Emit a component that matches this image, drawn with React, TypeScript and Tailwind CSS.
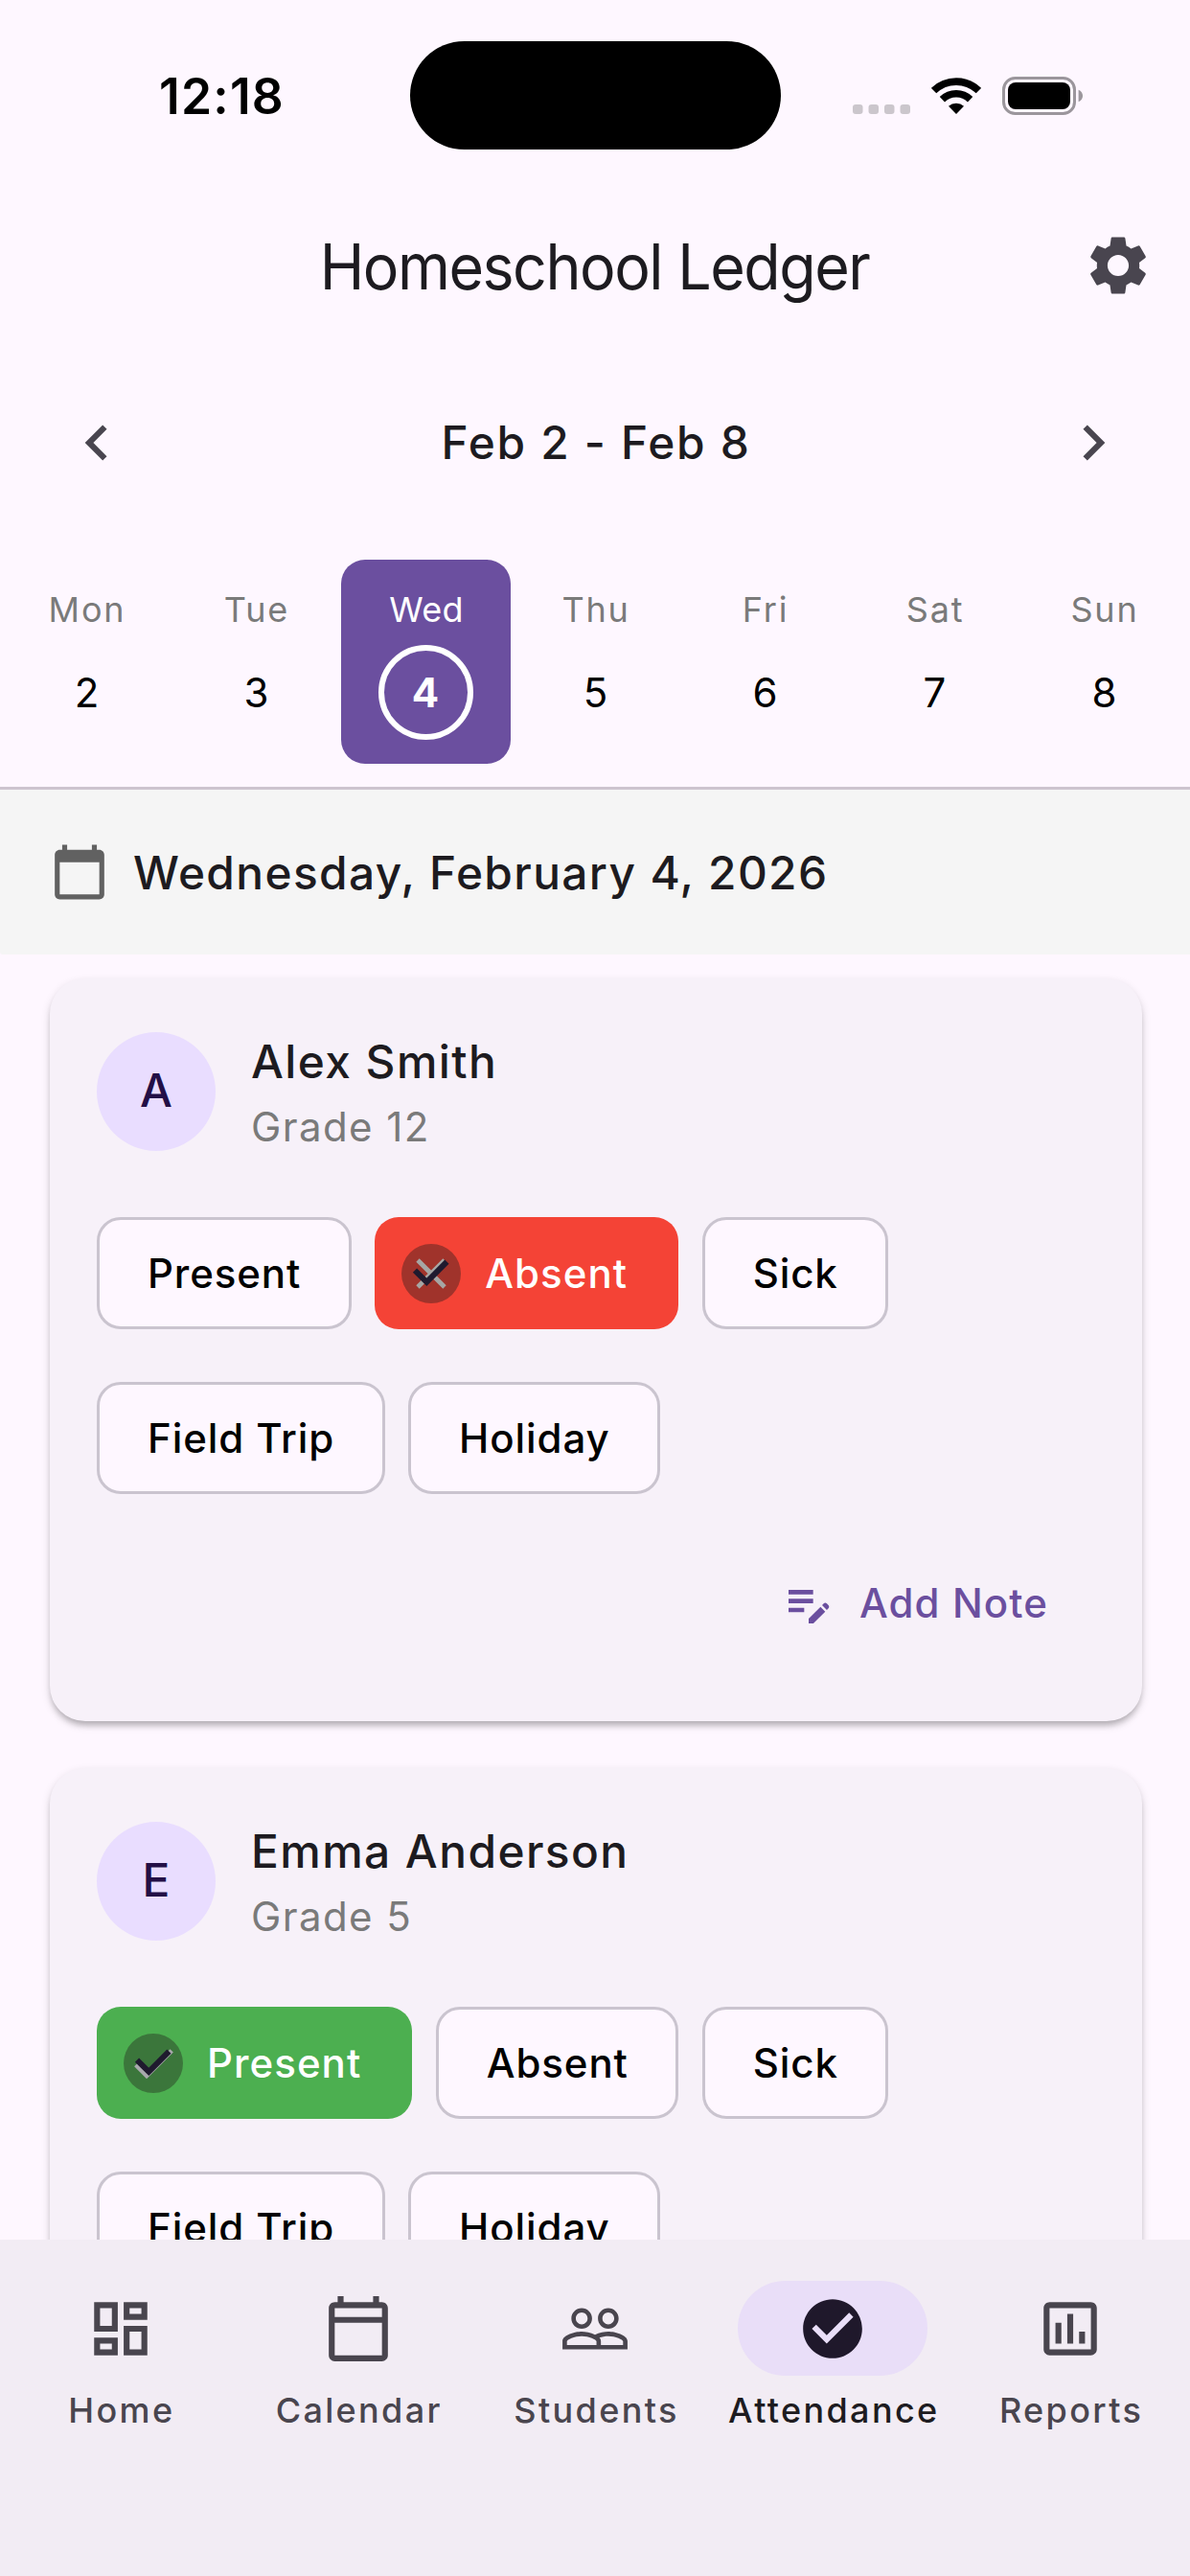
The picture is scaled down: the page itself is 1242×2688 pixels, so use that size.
import React from 'react';
import clsx from 'clsx';
import type { IconType } from 'react-icons';
import {
  MdCalendarToday,
  MdCheckCircle,
  MdChevronLeft,
  MdChevronRight,
  MdEditNote,
  MdOutlineAssessment,
  MdOutlineCalendarToday,
  MdOutlineDashboard,
  MdPeopleOutline,
  MdSettings,
} from 'react-icons/md';

type Status = 'Present' | 'Absent' | 'Sick' | 'Field Trip' | 'Holiday';

interface Student {
  name: string;
  grade: string;
  status: Status;
}

const statuses: Status[] = ['Present', 'Absent', 'Sick', 'Field Trip', 'Holiday'];

const days = [
  { label: 'Mon', date: 2 },
  { label: 'Tue', date: 3 },
  { label: 'Wed', date: 4, selected: true },
  { label: 'Thu', date: 5 },
  { label: 'Fri', date: 6 },
  { label: 'Sat', date: 7 },
  { label: 'Sun', date: 8 },
];

const students: Student[] = [
  { name: 'Alex Smith', grade: 'Grade 12', status: 'Absent' },
  { name: 'Emma Anderson', grade: 'Grade 5', status: 'Present' },
];

const navItems: { label: string; icon: IconType; active?: boolean }[] = [
  { label: 'Home', icon: MdOutlineDashboard },
  { label: 'Calendar', icon: MdOutlineCalendarToday },
  { label: 'Students', icon: MdPeopleOutline },
  { label: 'Attendance', icon: MdCheckCircle, active: true },
  { label: 'Reports', icon: MdOutlineAssessment },
];

function StatusBar() {
  return (
    <div className="flex h-[200px] shrink-0 items-center">
      <div className="w-[428px] pt-px pl-[166px] text-[51.5px] leading-none font-semibold tracking-[1.2px] text-black">
        12:18
      </div>
      <div className="mb-px h-[113px] w-[387px] rounded-full bg-black" />

      {/* Signal, wifi, battery */}
      <svg className="mt-[28px] ml-[75px] h-[10px] w-[60px]" viewBox="0 0 60 10" fill="#cbc6cc">
        <rect x="0" width="10.5" height="10" rx="3" />
        <rect x="16.5" width="10.5" height="10" rx="3" />
        <rect x="33" width="10.5" height="10" rx="3" />
        <rect x="49.5" width="10.5" height="10" rx="3" />
      </svg>
      <svg className="ml-[22px] h-[38px] w-[52px]" viewBox="0 0 52 38" fill="none" stroke="#000" strokeWidth="7.6">
        <path d="M2.6 13.6A33.6 33.6 0 0 1 49.4 13.6" />
        <path d="M11.4 22.7A21 21 0 0 1 40.6 22.7" />
        <path d="M26 38L18 29.8A12 12 0 0 1 34 29.8Z" fill="#000" stroke="none" />
      </svg>
      <svg className="ml-[22px] h-[40px] w-[85px]" viewBox="0 0 85 40">
        <rect x="1.5" y="1.5" width="74" height="37" rx="12" fill="none" stroke="#9b969c" strokeWidth="3" />
        <rect x="6" y="6" width="65" height="28" rx="8" fill="#000" />
        <path d="M79.6 13.8C82.4 14.8 84 17.2 84 20S82.4 25.2 79.6 26.2Z" fill="#9b969c" />
      </svg>
    </div>
  );
}

function WeekStrip() {
  return (
    <div className="flex shrink-0 pt-4 pr-[1.5px] pb-6 pl-[1.5px]">
      {days.map((day) => (
        <div
          key={day.label}
          className={clsx(
            'flex h-[213px] flex-1 flex-col items-center rounded-[25px] pt-[27px]',
            day.selected ? 'bg-[#6b4f9f] text-white' : 'text-black'
          )}
        >
          <div
            className={clsx(
              'h-[50px] pl-[2px] text-[36px] leading-[50px]',
              day.selected ? 'tracking-[0.3px]' : 'tracking-[1.8px] text-[#7a7a7a]'
            )}
          >
            {day.label}
          </div>
          <div
            className={clsx(
              'mt-3 flex size-[99px] items-center justify-center rounded-full text-[42px] leading-none',
              day.selected ? 'border-6 border-white font-bold' : 'pl-px'
            )}
          >
            {day.date}
          </div>
        </div>
      ))}
    </div>
  );
}

function ChipMark({ status }: { status: Status }) {
  return (
    <svg
      className={clsx('mr-[25px] size-[62px] rounded-full', status === 'Absent' ? 'bg-[#a0332b]' : 'bg-[#3b763b]')}
      viewBox="0 0 62 62"
      fill="none"
    >
      {status === 'Absent' ? (
        <path d="M17 17L45 45M45 17L17 45" stroke="#a6a6a4" strokeWidth="4.8" />
      ) : (
        <g transform="translate(3.2 3.2) scale(2.317)">
          <path d="M9 16.17L4.83 12l-1.42 1.41L9 19 21 7l-1.41-1.41z" fill="#a9a9ad" />
        </g>
      )}
      <path d="M14 27.6L26.3 39.8L47.4 18.7" stroke="#1f1a2e" strokeWidth="6" />
    </svg>
  );
}

function StatusChip({ status, selected }: { status: Status; selected: boolean }) {
  return (
    <div
      className={clsx(
        'flex h-[117px] items-center rounded-[25px] text-[42px] leading-none font-medium',
        selected
          ? 'pr-[53px] pl-[28px] tracking-[1.05px] text-white'
          : 'border-3 border-[#cac4cf] bg-[#fef7ff] pr-[49.5px] pl-[50px] tracking-[0.9px] text-black',
        selected && (status === 'Absent' ? 'bg-[#f44336]' : 'bg-[#4caf50]')
      )}
    >
      {selected && <ChipMark status={status} />}
      {status}
    </div>
  );
}

function StudentCard({ student }: { student: Student }) {
  return (
    <div className="shrink-0 rounded-[37px] bg-[#f7f1f9] px-[49px] pt-[50px] pb-[49px] shadow-[0_6px_6px_-2px_rgba(0,0,0,0.2),0_4px_10px_rgba(0,0,0,0.15)]">
      <div className="flex h-[135px] items-center">
        <div className="flex size-[124px] items-center justify-center rounded-full bg-[#e9ddff] pt-px text-[47.8px] leading-none font-medium text-[#230f46]">
          {student.name[0]}
        </div>
        <div className="ml-[37px]">
          <div className="h-[75px] text-[47.8px] leading-[75px] font-medium tracking-[1.45px] text-[#1d1b20]">
            {student.name}
          </div>
          <div className="h-[60px] text-[42px] leading-[60px] tracking-[1.4px] text-[#7a7a7a]">{student.grade}</div>
        </div>
      </div>

      <div className="mt-16 flex flex-wrap gap-x-[24.5px] gap-y-[55px] pr-[100px]">
        {statuses.map((status) => (
          <StatusChip key={status} status={status} selected={status === student.status} />
        ))}
      </div>

      <div className="mt-10 flex h-[148px] items-center justify-end pr-[49px] text-[#6b4f9f]">
        <MdEditNote className="size-[56px]" />
        <span className="ml-[25px] text-[42px] leading-none font-medium tracking-[1.1px]">Add Note</span>
      </div>
    </div>
  );
}

function BottomNav() {
  return (
    <nav className="flex h-[351px] shrink-0 bg-[#f2ecf4] pr-px pl-[2px]">
      {navItems.map(({ label, icon: Icon, active }) => (
        <div key={label} className="flex flex-1 flex-col items-center pt-[43px]">
          <div
            className={clsx(
              'flex h-[99px] w-[198px] items-center justify-center rounded-full',
              active ? 'bg-[#e9def8] text-[#1f182b]' : 'text-[#49454e]'
            )}
          >
            <Icon className="size-[74px]" />
          </div>
          <div
            className={clsx(
              'mt-3 h-[49px] pl-[2px] text-[36px] leading-[49px] font-medium tracking-[2.35px]',
              active ? 'text-[#1d1b20]' : 'text-[#49454e]'
            )}
          >
            {label}
          </div>
        </div>
      ))}
    </nav>
  );
}

export default function App() {
  return (
    <div className="flex h-[2688px] w-[1242px] flex-col overflow-hidden bg-[#fef7ff] font-['Inter',sans-serif]">
      <StatusBar />

      {/* App bar */}
      <header className="flex h-[155px] shrink-0 items-center text-[#1d1b20]">
        <div className="w-[149px]" />
        <h1 className="flex-1 scale-x-95 pr-px text-center text-[66px] leading-none whitespace-nowrap tracking-[-1.55px]">
          Homeschool Ledger
        </h1>
        <div className="flex w-[149px] justify-center pr-[2px] pb-[2px] text-[#49454f]">
          <MdSettings className="size-[74px]" />
        </div>
      </header>

      {/* Week picker */}
      <div className="flex h-[213px] shrink-0 items-center justify-between px-16 text-[#49454f]">
        <MdChevronLeft className="size-[74px]" />
        <div className="pt-[2px] pl-[2px] text-[47.8px] leading-none font-medium tracking-[1.7px] text-[#1d1b20]">
          Feb 2 - Feb 8
        </div>
        <MdChevronRight className="size-[74px]" />
      </div>
      <WeekStrip />

      {/* Selected date */}
      <div className="flex h-[175px] shrink-0 items-center rounded-bl-[3px] border-t-3 border-[#cdc4cf] bg-[#f5f5f5] pl-[52px]">
        <MdCalendarToday className="size-[62px] text-[#616161]" />
        <div className="ml-[25px] pt-[3px] text-[47.8px] leading-none font-medium tracking-[1.38px] text-[#1d1b20]">
          Wednesday, February 4, 2026
        </div>
      </div>

      <main className="flex min-h-0 flex-1 flex-col gap-[49px] overflow-hidden pt-[25px] pr-[50px] pl-[52px]">
        {students.map((student) => (
          <StudentCard key={student.name} student={student} />
        ))}
      </main>

      <BottomNav />
    </div>
  );
}
